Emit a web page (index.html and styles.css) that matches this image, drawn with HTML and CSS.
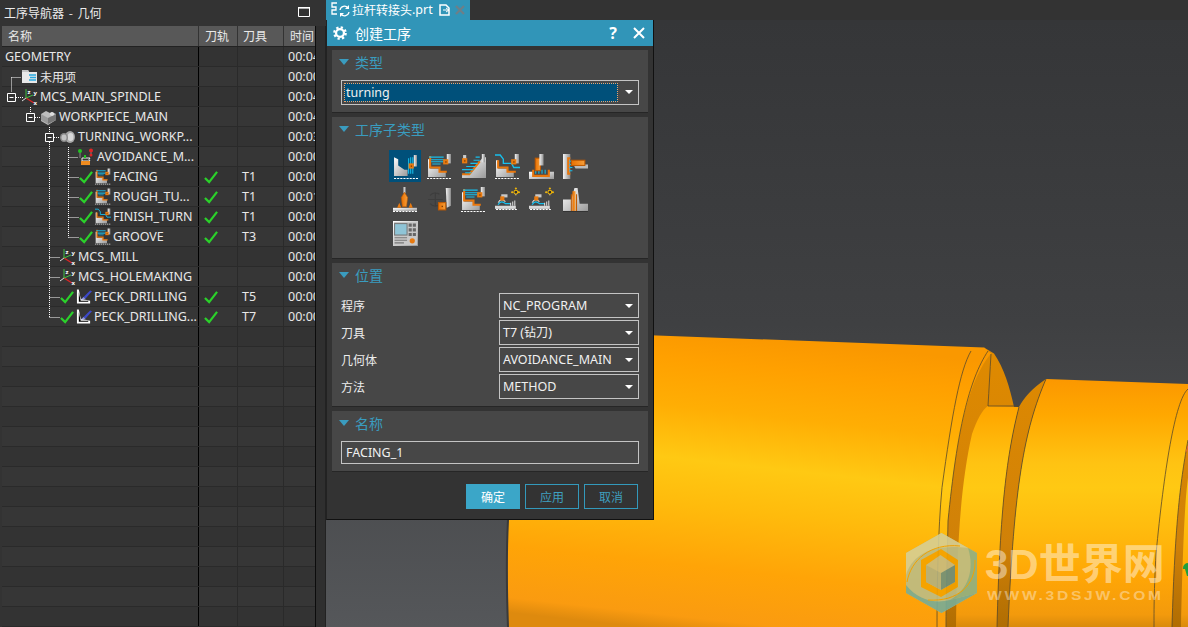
FILE: index.html
```html
<!DOCTYPE html>
<html lang="zh">
<head>
<meta charset="utf-8">
<title>创建工序</title>
<link rel="stylesheet" href="styles.css">
</head>
<body>
<svg class="defs" width="0" height="0" aria-hidden="true">
  <defs>
    <linearGradient id="gy" x1="0" y1="0" x2="1" y2="1"><stop offset="0" stop-color="#fff"/><stop offset="1" stop-color="#9a9a9a"/></linearGradient>
    <linearGradient id="gv" x1="0" y1="0" x2="1" y2="0"><stop offset="0" stop-color="#f4f4f4"/><stop offset="1" stop-color="#8f8f8f"/></linearGradient>
    <linearGradient id="or" x1="0" y1="0" x2="1" y2="0"><stop offset="0" stop-color="#e86f00"/><stop offset="1" stop-color="#f6a03c"/></linearGradient>

    <symbol id="op1" viewBox="0 0 24 24"><path d="M1 3l4 2v6l6 4h3v6H1z" fill="url(#gy)"/><path d="M15 4v15M17 3v16M19 3v16" stroke="#16c0ee" fill="none"/><path d="M20 1h3v11h-3z" fill="url(#gv)"/><rect x="15" y="9" width="5" height="5" fill="#e87a10"/><rect x="17" y="11" width="1.3" height="1.3" fill="#7a3b00"/><path d="M1 23.500h23" stroke="#fff" stroke-dasharray="2 1" fill="none"/></symbol>

    <symbol id="op2" viewBox="0 0 24 24"><path d="M1 5h2v9h9v3h6v5H1z" fill="url(#gy)"/><path d="M3 2v11h9v4h7" stroke="#e8760c" stroke-width="2" fill="none"/><path d="M2 3h14M4 5.500h13M4 7.500h12M5 9.500h8" stroke="#16c0ee" fill="none"/><path d="M19 0h4v9h-4z" fill="url(#gv)"/><rect x="15.500" y="5" width="5" height="5" fill="#e87a10"/><rect x="17.500" y="7" width="1.300" height="1.300" fill="#7a3b00"/><path d="M0 23.500h24" stroke="#fff" stroke-dasharray="2 1" fill="none"/></symbol>

    <symbol id="op3" viewBox="0 0 24 24"><path d="M1 23V20h7L21 3h3v20z" fill="url(#gy)"/><path d="M1 19.500h7L18 7" stroke="#e8760c" stroke-width="2" fill="none"/><path d="M18 3h-4M18 6h-6M16 9h-7M14 12H5M12 15H1M10 18H4" stroke="#16c0ee" fill="none"/><path d="M2 1h3v4H2z" fill="#ccc"/><rect x="1" y="4" width="5" height="5" fill="#e87a10"/><rect x="3" y="6" width="1.300" height="1.300" fill="#7a3b00"/><path d="M20 0h3v8h-3z" fill="url(#gv)"/></symbol>

    <symbol id="op4" viewBox="0 0 24 24"><path d="M1 6h2v8h9v3h6v5H1z" fill="url(#gy)"/><path d="M3 6v7h9v4h8" stroke="#e8760c" stroke-width="2" fill="none"/><path d="M0 1h5l3 4v4h8l2 4h6" stroke="#16c0ee" stroke-width="1.300" fill="none"/><path d="M19 0h4v9h-4z" fill="url(#gv)"/><rect x="15.500" y="5" width="5" height="5" fill="#e87a10"/><rect x="17.500" y="7" width="1.300" height="1.300" fill="#7a3b00"/><path d="M0 23.500h24" stroke="#fff" stroke-dasharray="2 1" fill="none"/></symbol>

    <symbol id="op5" viewBox="0 0 24 24"><path d="M0 17h4v5h15v-5h5v7H0z" fill="url(#gy)"/><path d="M4 15v6h15v-6" stroke="#e8760c" stroke-width="2" fill="none"/><path d="M6.500 15v4M9.500 15v4M12.500 15v4M15.500 15v4" stroke="#16c0ee" fill="none"/><rect x="6" y="4" width="5" height="12" fill="url(#or)" stroke="#c05a00"/><path d="M10 0h4v11h-4z" fill="url(#gv)"/></symbol>

    <symbol id="op6" viewBox="0 0 24 24"><path d="M0 0h7v24H0z" fill="url(#gv)"/><path d="M7 4H5v15h2" stroke="#e8760c" stroke-width="2" fill="none"/><path d="M6 7h3M6 10h3M6 13h3M6 16h3" stroke="#16c0ee" fill="none"/><path d="M10 10h14v4H12z" fill="#bbb"/><rect x="8" y="6" width="13" height="5" fill="url(#or)" stroke="#c05a00"/></symbol>

    <symbol id="op7" viewBox="0 0 24 24"><path d="M0 20h23v3H0z" fill="url(#gy)"/><path d="M10 0h2v6h-2z" fill="#c9c9c9"/><path d="M11 5l3 5-1 9h-4l-1-9z" fill="url(#or)" stroke="#c05a00" stroke-width=".6"/><path d="M4 20l2-5 2 5zM15 20l2-5 2 5z" fill="#e87a10"/><path d="M0 23.500h24" stroke="#fff" stroke-dasharray="2 1" fill="none"/></symbol>

    <symbol id="op8" viewBox="0 0 24 24"><path d="M3 8a7 7 0 0 1 9-1M1 12h14M8 5v14M3 16a7 7 0 0 0 9 1" stroke="#3d3d3d" fill="none"/><path d="M18 1h5v17l-4 2z" fill="url(#gv)"/><rect x="11" y="15" width="7" height="7" fill="url(#or)" stroke="#c05a00"/><rect x="14" y="18" width="1.300" height="1.300" fill="#7a3b00"/></symbol>

    <symbol id="op10" viewBox="0 0 24 24"><path d="M0 18h20v3H0z" fill="#d8d8d8"/><path d="M1 21.500h20" stroke="#fff" stroke-dasharray="2 1" fill="none"/><path d="M3 17c2-4 5-3 7-1h5" stroke="#16c0ee" stroke-width="1.200" fill="none"/><path d="M3 15c2-4 5-3 7-1M15 18v-3M17 18v-4M19 18v-5" stroke="#ddd" fill="none"/><path d="M6 7h6v3H6z" fill="#c9c9c9"/><rect x="5" y="9" width="4" height="4" fill="#e87a10"/><path d="M20 1v8M16 5h8" stroke="#fff" stroke-dasharray="1 1" fill="none"/><circle cx="20" cy="5" r="1.800" fill="#2d2d2d" stroke="#f0b400"/><circle cx="20" cy="1.500" r="1" fill="#f0b400"/><circle cx="16.500" cy="5" r="1" fill="#f0b400"/><circle cx="23" cy="5" r="1" fill="#f0b400"/></symbol>

    <symbol id="op12" viewBox="0 0 24 24"><path d="M0 12h8l3-11h3l2 15h8v7H0z" fill="url(#gy)"/><path d="M9 4h3v19H9z" fill="url(#or)"/><path d="M8 7v16M13 7v16" stroke="#c05a00" fill="none"/><path d="M0 23.500h24" stroke="#333" fill="none"/></symbol>

    <symbol id="op13" viewBox="0 0 24 24"><rect width="24" height="24" fill="url(#gy)"/><rect x="1" y="1" width="22" height="22" fill="#c8c8c8"/><rect x="1.500" y="2.500" width="12" height="11" fill="#8fc4d6" stroke="#777"/><path d="M15 2.500h3v3h-3zM19 2.500h3v3h-3zM15 7h3v3h-3zM19 7h3v3h-3zM15 11.500h3v3h-3zM19 11.500h3v3h-3z" fill="#666"/><path d="M1.500 16h12M1.500 18.500h12M1.500 21h9" stroke="#777" fill="none"/><circle cx="18.500" cy="19" r="2.500" fill="#e87a10"/></symbol>

    <symbol id="check" viewBox="0 0 15 14"><path d="M1 8l4.500 4.500L14 1.500" stroke="#2bd12b" stroke-width="2.400" fill="none"/></symbol>

    <symbol id="mcs" viewBox="0 0 17 17"><path d="M5 10V1" stroke="#3fbf3f" fill="none"/><path d="M5 10L1 13" stroke="#e0e0e0" fill="none"/><path d="M5 10l8 5" stroke="#e02525" stroke-width="1.200" fill="none"/><path d="M5 10l7-3" stroke="#3fbf3f" fill="none"/><text x="6.500" y="5.500" class="axis">z</text><text x="12.500" y="6.500" class="axis">y</text><text x="12.500" y="16.500" class="axis">x</text></symbol>

    <symbol id="folder" viewBox="0 0 17 17"><path d="M1 2h6l1 2h8v11H1z" fill="#e8e8e8"/><path d="M1 2h6l1 2H1z" fill="#c4c4c4"/><path d="M8 7h7M9 9.500h6M8 12h7" stroke="#29a9e0" stroke-width="1.300" fill="none"/></symbol>

    <symbol id="wp" viewBox="0 0 17 17"><path d="M1 6l5-3 4 2 2-1 4 2v6l-8 5-7-4z" fill="#bdbdbd"/><path d="M1 6l7 4v6l-7-4z" fill="#9a9a9a"/><path d="M8 10l8-4v6l-8 4z" fill="#777"/><path d="M10 5l2-1 2 1v2l-2 1-2-1z" fill="#dedede"/></symbol>

    <symbol id="turn" viewBox="0 0 17 17"><ellipse cx="11" cy="9" rx="5" ry="6" fill="#a8a8a8"/><ellipse cx="11.500" cy="9" rx="3" ry="4" fill="#d8d8d8"/><ellipse cx="5" cy="9.500" rx="4" ry="4.500" fill="#8c8c8c"/><ellipse cx="5" cy="9.500" rx="2.500" ry="3" fill="#c4c4c4"/></symbol>

    <symbol id="avoid" viewBox="0 0 17 17"><path d="M2 3v7M13 3v5" stroke="#888" fill="none"/><circle cx="2" cy="3" r="2" fill="#22c322"/><circle cx="13" cy="2.500" r="2" fill="#e02525"/><circle cx="13" cy="7" r="1.500" fill="#e02525"/><path d="M4 10h8l-1 1.500 1 1.500H4z" fill="none" stroke="#eee"/><path d="M6 7h2v3H6z" fill="#22c322"/><rect x="3" y="13" width="9" height="4" fill="#ef8c20"/></symbol>

    <symbol id="drill" viewBox="0 0 17 17"><path d="M1 1h2l2 10 10 2v3H1z" fill="#fff"/><path d="M3 4l2 9h8v1H3z" fill="#000"/><path d="M8 9l7-7 2 1-7 8z" fill="#3d49c9"/><path d="M5 12l3-3 2 2z" fill="#8f96ea"/></symbol>
  </defs>
</svg>

<aside class="nav">
  <header class="nav-title">
    <span class="cjk spaced">工序导航器 - 几何</span>
    <svg class="maxbtn" viewBox="0 0 12 10"><path d="M.5 1h11v8.500H.5z" fill="none" stroke="#fff"/><path d="M0 .5h12" stroke="#fff" stroke-width="1.500"/></svg>
  </header>
  <div class="table-wrap">
    <div class="table">
      <div class="row head"><div class="name"><span class="cjk head-1">名称</span></div><div class="c2"><span class="cjk">刀轨</span></div><div class="c3"><span class="cjk">刀具</span></div><div class="c4"><span class="cjk">时间</span></div></div>
      <div class="tbody">
        <div class="row"><div class="name p0">GEOMETRY</div><div class="c2"></div><div class="c3"></div><div class="c4">00:04</div></div>
        <div class="row alt"><div class="name p1"><svg class="ico"><use href="#folder"/></svg><span class="cjk">未用项</span></div><div class="c2"></div><div class="c3"></div><div class="c4">00:00</div></div>
        <div class="row"><div class="name p1"><svg class="ico"><use href="#mcs"/></svg>MCS_MAIN_SPINDLE</div><div class="c2"></div><div class="c3"></div><div class="c4">00:04</div></div>
        <div class="row alt"><div class="name p2"><svg class="ico"><use href="#wp"/></svg>WORKPIECE_MAIN</div><div class="c2"></div><div class="c3"></div><div class="c4">00:04</div></div>
        <div class="row"><div class="name p3"><svg class="ico"><use href="#turn"/></svg>TURNING_WORKP...</div><div class="c2"></div><div class="c3"></div><div class="c4">00:03</div></div>
        <div class="row alt"><div class="name p4"><svg class="ico"><use href="#avoid"/></svg>AVOIDANCE_M...</div><div class="c2"></div><div class="c3"></div><div class="c4">00:00</div></div>
        <div class="row"><div class="name p5"><svg class="chk"><use href="#check"/></svg><svg class="opi"><use href="#op2"/></svg>FACING</div><div class="c2"><svg class="chk"><use href="#check"/></svg></div><div class="c3">T1</div><div class="c4">00:00</div></div>
        <div class="row alt"><div class="name p5"><svg class="chk"><use href="#check"/></svg><svg class="opi"><use href="#op2"/></svg>ROUGH_TU...</div><div class="c2"><svg class="chk"><use href="#check"/></svg></div><div class="c3">T1</div><div class="c4">00:01</div></div>
        <div class="row"><div class="name p5"><svg class="chk"><use href="#check"/></svg><svg class="opi"><use href="#op4"/></svg>FINISH_TURN</div><div class="c2"><svg class="chk"><use href="#check"/></svg></div><div class="c3">T1</div><div class="c4">00:00</div></div>
        <div class="row alt"><div class="name p5"><svg class="chk"><use href="#check"/></svg><svg class="opi"><use href="#op2"/></svg>GROOVE</div><div class="c2"><svg class="chk"><use href="#check"/></svg></div><div class="c3">T3</div><div class="c4">00:00</div></div>
        <div class="row"><div class="name p3"><svg class="ico"><use href="#mcs"/></svg>MCS_MILL</div><div class="c2"></div><div class="c3"></div><div class="c4">00:00</div></div>
        <div class="row alt"><div class="name p3"><svg class="ico"><use href="#mcs"/></svg>MCS_HOLEMAKING</div><div class="c2"></div><div class="c3"></div><div class="c4">00:00</div></div>
        <div class="row"><div class="name p6"><svg class="chk"><use href="#check"/></svg><svg class="opi"><use href="#drill"/></svg>PECK_DRILLING</div><div class="c2"><svg class="chk"><use href="#check"/></svg></div><div class="c3">T5</div><div class="c4">00:00</div></div>
        <div class="row alt"><div class="name p6"><svg class="chk"><use href="#check"/></svg><svg class="opi"><use href="#drill"/></svg>PECK_DRILLING...</div><div class="c2"><svg class="chk"><use href="#check"/></svg></div><div class="c3">T7</div><div class="c4">00:00</div></div>
        <div class="row"><div class="name"></div><div class="c2"></div><div class="c3"></div><div class="c4"></div></div>
        <div class="row alt"><div class="name"></div><div class="c2"></div><div class="c3"></div><div class="c4"></div></div>
        <div class="row"><div class="name"></div><div class="c2"></div><div class="c3"></div><div class="c4"></div></div>
        <div class="row alt"><div class="name"></div><div class="c2"></div><div class="c3"></div><div class="c4"></div></div>
        <div class="row"><div class="name"></div><div class="c2"></div><div class="c3"></div><div class="c4"></div></div>
        <div class="row alt"><div class="name"></div><div class="c2"></div><div class="c3"></div><div class="c4"></div></div>
        <div class="row"><div class="name"></div><div class="c2"></div><div class="c3"></div><div class="c4"></div></div>
        <div class="row alt"><div class="name"></div><div class="c2"></div><div class="c3"></div><div class="c4"></div></div>
        <div class="row"><div class="name"></div><div class="c2"></div><div class="c3"></div><div class="c4"></div></div>
        <div class="row alt"><div class="name"></div><div class="c2"></div><div class="c3"></div><div class="c4"></div></div>
        <div class="row"><div class="name"></div><div class="c2"></div><div class="c3"></div><div class="c4"></div></div>
        <div class="row alt"><div class="name"></div><div class="c2"></div><div class="c3"></div><div class="c4"></div></div>
        <div class="row"><div class="name"></div><div class="c2"></div><div class="c3"></div><div class="c4"></div></div>
        <div class="row alt"><div class="name"></div><div class="c2"></div><div class="c3"></div><div class="c4"></div></div>
        <div class="row"><div class="name"></div><div class="c2"></div><div class="c3"></div><div class="c4"></div></div>
        <!-- connector lines lie over the rows; coordinates are page x, page y -->
        <svg class="tree-lines" viewBox="2 47 200 300">
          <g class="dots">
            <path d="M11.500 77.500H21M11.500 77.500V92"/>
            <path d="M16 97.500h7M30.500 107V112"/>
            <path d="M35 117.500h5M49.500 127V132"/>
            <path d="M54 137.500h6M49.500 142V317.500"/>
            <path d="M49.500 257.500H60M49.500 277.500H60M49.500 297.500H60M49.500 317.500H60"/>
            <path d="M68.500 147V237.500"/>
            <path d="M68.500 157.500H78M68.500 177.500H79M68.500 197.500H79M68.500 217.500H79M68.500 237.500H79"/>
          </g>
          <g class="boxes">
            <path d="M7.500 93.500h8v8h-8zM9.500 97.500h4"/>
            <path d="M26.500 113.500h8v8h-8zM28.500 117.500h4"/>
            <path d="M45.500 133.500h8v8h-8zM47.500 137.500h4"/>
          </g>
        </svg>
      </div>
    </div>
    <div class="track"></div>
  </div>
</aside>

<main class="view">
  <div class="tabbar">
    <div class="tab">
      <svg class="tab-ico" viewBox="0 0 20 17"><path d="M6 1H1v4h4v3H1v4h5" stroke="#fff" stroke-width="1.300" fill="none"/><path d="M9 8a4.500 4.500 0 0 1 8-2M18 10a4.500 4.500 0 0 1-8 2" stroke="#fff" stroke-width="1.300" fill="none"/><path d="M18 3v4h-4zM9 15v-4h4z" fill="#fff"/></svg>
      <span class="cjk">拉杆转接头</span><span class="tab-ext">.prt</span>
      <svg class="tab-pg" viewBox="0 0 11 12"><path d="M1 1h6l3 3v7H1z" fill="none" stroke="#fff" stroke-width="1.500"/><path d="M4 6h6M7 4l3 2-3 2" stroke="#fff" fill="none"/></svg>
      <svg class="tab-x" viewBox="0 0 10 10"><path d="M1 1l8 8M9 1l-8 8" stroke="#6e7f88" stroke-width="2.200"/></svg>
    </div>
  </div>
  <div class="stage">
    <svg class="scene" viewBox="326 20 862 607" preserveAspectRatio="none">
      <defs>
        <linearGradient id="bgv" gradientUnits="userSpaceOnUse" x1="0" y1="20" x2="0" y2="627"><stop offset="0" stop-color="#353638"/><stop offset=".5" stop-color="#3f4042"/><stop offset="1" stop-color="#55575a"/></linearGradient>
        <linearGradient id="cyl" gradientUnits="userSpaceOnUse" x1="700" y1="330" x2="667" y2="630"><stop offset="0" stop-color="#fa9800"/><stop offset=".1" stop-color="#ffa000"/><stop offset=".26" stop-color="#ffae04"/><stop offset=".43" stop-color="#ffc913"/><stop offset=".58" stop-color="#ffbb0c"/><stop offset=".78" stop-color="#ffa407"/><stop offset=".95" stop-color="#fa9b10"/><stop offset="1" stop-color="#de8a0e"/></linearGradient>
        <linearGradient id="cyl2" gradientUnits="userSpaceOnUse" x1="0" y1="378" x2="0" y2="627"><stop offset="0" stop-color="#fb9700"/><stop offset=".15" stop-color="#ffa800"/><stop offset=".34" stop-color="#ffc312"/><stop offset=".44" stop-color="#ffc913"/><stop offset=".6" stop-color="#ffbc0e"/><stop offset=".8" stop-color="#ffa606"/><stop offset=".95" stop-color="#f39a0c"/><stop offset="1" stop-color="#d98a0c"/></linearGradient>
        <linearGradient id="ring" gradientUnits="userSpaceOnUse" x1="0" y1="350" x2="0" y2="627"><stop offset="0" stop-color="#df8a00"/><stop offset=".7" stop-color="#d08108"/><stop offset="1" stop-color="#b06d02"/></linearGradient>
      </defs>
      <rect x="326" y="20" width="862" height="607" fill="url(#bgv)"/>
      <path d="M1014 407C1010 388 1004 368 994 353.500L984 347.500L940 420L946 627H1010V407z" fill="url(#ring)"/>
      <path d="M508 627C506 500 508 400 510 330L984 347.500L991 353.500C969 380 957 430 948 521L946 627z" fill="url(#cyl)"/>
      <path d="M988 406L1019 407C1007 454 1000 507 997 627H956C957 550 960 487 972 434C977 420 982 410 988 406z" fill="url(#cyl2)"/>
      <path d="M1019 407C1024 398 1032 388 1046 379C1024 430 1014 487 1008 627H997C1000 507 1007 454 1019 407z" fill="url(#ring)"/>
      <path d="M1046 379L1188 384V627H1008C1014 487 1024 430 1046 379z" fill="url(#cyl2)"/>
      <path d="M1188 440C1181 478 1175 520 1172 627H1181C1183 540 1185 500 1188 478z" fill="url(#ring)"/>
      <g class="edges">
        <path d="M971 351C960 370 952 414 942 487.500C938 530 937 588 937 627"/>
        <path d="M988 351C969 380 957 430 948 521C947 570 946 600 946 627"/>
        <path d="M991 354C990 370 989 390 988 406"/>
        <path d="M988 406H1019"/>
        <path d="M1019 407C1007 454 1000 507 997 627"/>
        <path d="M1046 379C1024 430 1014 487 1008 627"/>
        <path d="M1188 389C1175 400 1164 471 1156 554C1154 590 1154 610 1154 627"/>
        <path d="M1188 440C1181 478 1175 520 1172 627"/>
        <path d="M508 520C506 560 507 600 508 627" class="edge-soft"/>
      </g>
      <path d="M1188 563a5 5 0 0 0-5 5v1h2l2 7h1z" fill="#1f9e3d"/>
      <path d="M1186 452l2-6" stroke="#e2603a" fill="none"/>
      <!-- watermark emblem -->
      <g class="emblem">
        <path d="M941.500 533L977 553V593L941.500 613L906 593V553z" fill="#bcbd86"/>
        <path d="M977 553V593L950 600C968 590 975 570 968 548z" fill="#8fb184"/>
        <path d="M941.500 533L906 553V575C912 556 930 543 968 548z" fill="#d6cf94"/>
        <path d="M906 593L941.500 613L977 593L950 600C935 604 918 600 906 585z" fill="#78ad97"/>
        <path d="M941 549L958 560V587L941 597L921 587V560z" fill="#f4a300"/>
        <path d="M940.500 555L955 565V582L941 590L926 582V565z" fill="#c8bc80"/>
        <path d="M926 565L941 573V590L926 582z" fill="#b3b17f"/>
        <path d="M955 565L941 573V590L955 582z" fill="#6f917c"/>
        <path d="M907 582C911 560 930 543 960 546M975 560C976 585 958 602 928 600" fill="none" stroke="#f2a200"/>
      </g>
    </svg>
    <div class="watermark">
      <div class="wm-big">3D世界网</div>
      <div class="wm-small">WWW.3DSJW.COM</div>
    </div>

    <section class="dialog">
      <header class="dlg-title">
        <svg class="gear" viewBox="0 0 16 16"><circle cx="8" cy="8" r="4.500" fill="none" stroke="#fff" stroke-width="2.600"/><circle cx="8" cy="8" r="6.500" fill="none" stroke="#fff" stroke-width="2.600" stroke-dasharray="2.600 2.500"/></svg>
        <span class="dlg-name">创建工序</span>
        <span class="help">?</span>
        <svg class="close" viewBox="0 0 12 12"><path d="M1 1l10 10M11 1L1 11" stroke="#fff" stroke-width="2"/></svg>
      </header>
      <div class="dlg-body">
        <div class="group">
          <div class="g-head"><i class="tri"></i><span>类型</span></div>
          <div class="g-content">
            <div class="select wide"><span class="sel-val">turning</span><i class="arrow"></i></div>
          </div>
        </div>
        <div class="group g-sub">
          <div class="g-head"><i class="tri"></i><span>工序子类型</span></div>
          <div class="op-grid">
            <div class="tile on"><svg><use href="#op1"/></svg></div>
            <div class="tile"><svg><use href="#op2"/></svg></div>
            <div class="tile"><svg><use href="#op3"/></svg></div>
            <div class="tile"><svg><use href="#op4"/></svg></div>
            <div class="tile"><svg><use href="#op5"/></svg></div>
            <div class="tile"><svg><use href="#op6"/></svg></div>
            <div class="tile"><svg><use href="#op7"/></svg></div>
            <div class="tile"><svg><use href="#op8"/></svg></div>
            <div class="tile"><svg><use href="#op2"/></svg></div>
            <div class="tile"><svg><use href="#op10"/></svg></div>
            <div class="tile"><svg><use href="#op10"/></svg></div>
            <div class="tile"><svg><use href="#op12"/></svg></div>
            <div class="tile"><svg><use href="#op13"/></svg></div>
          </div>
        </div>
        <div class="group">
          <div class="g-head"><i class="tri"></i><span>位置</span></div>
          <div class="g-content form">
            <label class="cjk">程序</label><div class="select"><span>NC_PROGRAM</span><i class="arrow"></i></div>
            <label class="cjk">刀具</label><div class="select"><span>T7 (<span class="cjk">钻刀</span>)</span><i class="arrow"></i></div>
            <label class="cjk">几何体</label><div class="select"><span>AVOIDANCE_MAIN</span><i class="arrow"></i></div>
            <label class="cjk">方法</label><div class="select"><span>METHOD</span><i class="arrow"></i></div>
          </div>
        </div>
        <div class="group">
          <div class="g-head"><i class="tri"></i><span>名称</span></div>
          <div class="g-content">
            <div class="input">FACING_1</div>
          </div>
        </div>
        <footer class="dlg-foot">
          <button class="btn primary">确定</button>
          <button class="btn">应用</button>
          <button class="btn">取消</button>
        </footer>
      </div>
    </section>
  </div>
</main>
</body>
</html>
```

FILE: styles.css
```css
* { box-sizing: border-box; }
html, body { height: 100%; }
body {
  margin: 0;
  width: 1188px;
  height: 627px;
  overflow: hidden;
  display: flex;
  background: #333;
  color: #e8e8e8;
  font: 12.500px/1 "Noto Sans", "Noto Sans CJK SC", sans-serif;
}
.defs { position: absolute; }
.cjk { font: 12px/1 "Noto Sans CJK SC", sans-serif; }
.spaced { word-spacing: 2px; }
.axis { font: 700 6px "Noto Sans", sans-serif; fill: #fff; }

/* navigator */
.nav { width: 326px; flex: none; display: flex; flex-direction: column; background: #333; }
.nav-title { height: 26px; flex: none; display: flex; align-items: center; justify-content: space-between; padding: 0 16px 0 4px; color: #ececec; }
.maxbtn { width: 12px; height: 10px; margin-bottom: 2px; }
.table-wrap { flex: 1; display: flex; min-height: 0; padding-left: 2px; }
.table { width: 314px; flex: none; border-right: 1px solid #0c0c0c; overflow: hidden; }
.track { flex: 1; background: #2f2f2f; border-right: 1px solid #222; }
.tbody { position: relative; }
.row { display: grid; grid-template-columns: 197px 39px 46px 31px; height: 20px; background: #333; border-bottom: 1px solid #2a2a2a; }
.row.alt { background: #363636; }
.row > div { display: flex; align-items: center; overflow: hidden; white-space: nowrap; padding-top: 1px; }
.row svg, .row .cjk { margin-top: -1px; }
.row.head { height: 21px; background: #555; border-bottom: 1px solid #222; }
.row.head > div { background: #585858; }
.row.head .c2, .row.head .c3 { border-right: 1px solid #333; }
.row.head .name { border-right: 1px solid #333; }
.head-1 { margin-left: 6px; }
.name { border-right: 1px solid #000; gap: 2px; }
.c2 { border-right: 1px solid #2a2a2a; padding-left: 5px; }
.c3 { border-right: 1px solid #2a2a2a; padding-left: 4px; }
.c4 { padding-left: 4px; }
.head .c2 { padding-left: 6px; }
.head .c3 { padding-left: 5px; }
.head .c4 { padding-left: 6px; }
.p0 { padding-left: 3px; }
.p1 { padding-left: 19px; }
.p2 { padding-left: 38px; }
.p3 { padding-left: 57px; }
.p4 { padding-left: 76px; }
.p5 { padding-left: 77px; }
.p6 { padding-left: 58px; }
.ico { width: 17px; height: 17px; flex: none; }
.chk { width: 14px; height: 14px; flex: none; }
.opi { width: 16px; height: 17px; flex: none; }
.tree-lines { position: absolute; left: 0; top: 0; width: 200px; height: 300px; pointer-events: none; margin-top: 0; }
.dots { fill: none; stroke: #fff; stroke-dasharray: 1 1; }
.boxes { fill: #333; stroke: #fff; }

/* main viewport */
.view { flex: 1; display: flex; flex-direction: column; min-width: 0; }
.tabbar { height: 20px; flex: none; background: #333; }
.tab { width: 144px; height: 20px; background: #3195b8; display: flex; align-items: center; padding-left: 5px; color: #fff; }
.tab-ico { width: 20px; height: 17px; flex: none; margin-right: 1px; }
.tab-ext { font-size: 12.500px; }
.tab-pg { width: 11px; height: 12px; margin-left: 6px; flex: none; }
.tab-x { width: 10px; height: 10px; margin-left: 5px; flex: none; }
.stage { flex: 1; position: relative; overflow: hidden; }
.scene { display: block; width: 862px; height: 607px; }
.edges { fill: none; stroke: #5a4a2a; stroke-width: .8; }
.edge-soft { stroke: #3a3a3a; stroke-width: 2; }
.emblem { opacity: .9; }

.watermark { position: absolute; left: 659px; top: 523px; color: rgba(255,255,255,.45); white-space: nowrap; }
.wm-big { font: 700 42px/44px "Liberation Sans", "Noto Sans CJK SC", sans-serif; }
.wm-small { font: 700 12px/14px "Liberation Sans", sans-serif; letter-spacing: 2.100px; margin-top: 2px; margin-left: 2px; opacity: .85; transform: scaleX(1.3); transform-origin: left center; }

/* dialog */
.dialog { position: absolute; left: 0; top: 0; width: 328px; height: 500px; background: #333; border-left: 1px solid #222; border-right: 1px solid #111; border-bottom: 1px solid #111; display: flex; flex-direction: column; }
.dlg-title { height: 26px; flex: none; background: #3195b8; display: flex; align-items: center; padding: 0 8px 0 6px; color: #fff; }
.gear { width: 14px; height: 14px; flex: none; }
.dlg-name { font: 14px/1 "Noto Sans CJK SC", sans-serif; margin-left: 8px; flex: 1; }
.help { font: 700 16px/1 "Noto Sans", sans-serif; margin-right: 16px; }
.close { width: 12px; height: 12px; }
.dlg-body { flex: 1; padding: 4px 5px 0; display: flex; flex-direction: column; gap: 4px; }
.group { background: #474747; border-bottom: 1px solid #262626; padding-bottom: 7px; }
.g-head { height: 30px; padding: 0 0 6px 7px; display: flex; align-items: center; color: #3a9cbf; font: 14px/1 "Noto Sans CJK SC", sans-serif; }
.tri { width: 0; height: 0; border-left: 5.500px solid transparent; border-right: 5.500px solid transparent; border-top: 6px solid #3a9cbf; margin-right: 6px; }
.g-content { padding: 0 9px; }
.select { height: 25px; border: 1px solid #c4c4c4; display: flex; align-items: center; justify-content: space-between; padding: 1px 5px 0 3px; color: #f0f0f0; }
.select .arrow { margin-top: -1px; }
.select.wide { padding: 2px 5px 2px 2px; }
.sel-val { flex: 1; align-self: stretch; background: #00507a; outline: 1px dotted #f0a46c; outline-offset: -1px; margin-right: 7px; padding: 1px 0 0 2px; display: flex; align-items: center; }
.arrow { width: 0; height: 0; border-left: 4px solid transparent; border-right: 4px solid transparent; border-top: 4px solid #fff; flex: none; }
.form { display: grid; grid-template-columns: 158px 140px; row-gap: 2px; align-items: center; }
.form label { color: #ededed; }
.input { height: 23px; border: 1px solid #c4c4c4; display: flex; align-items: center; padding: 1px 0 0 4px; color: #f0f0f0; }
.g-sub { padding-bottom: 8px; }
.op-grid { margin: 2px 0 0 57px; display: grid; grid-template-columns: repeat(6, 34px); grid-template-rows: 34px 33px 34px; }
.tile { width: 32px; height: 32px; align-self: center; display: flex; align-items: center; justify-content: center; }
.tile svg { width: 25px; height: 25px; }
.tile.on { background: #00507a; }
.dlg-foot { display: flex; justify-content: flex-end; gap: 5px; padding: 8px 10px 0 0; }
.btn { width: 54px; height: 25px; padding: 0; background: transparent; border: 1px solid #3399bb; color: #3f9fbf; font: 12px/1 "Noto Sans CJK SC", sans-serif; }
.btn.primary { background: #3ba6c8; border-color: #3ba6c8; color: #fff; }
```
